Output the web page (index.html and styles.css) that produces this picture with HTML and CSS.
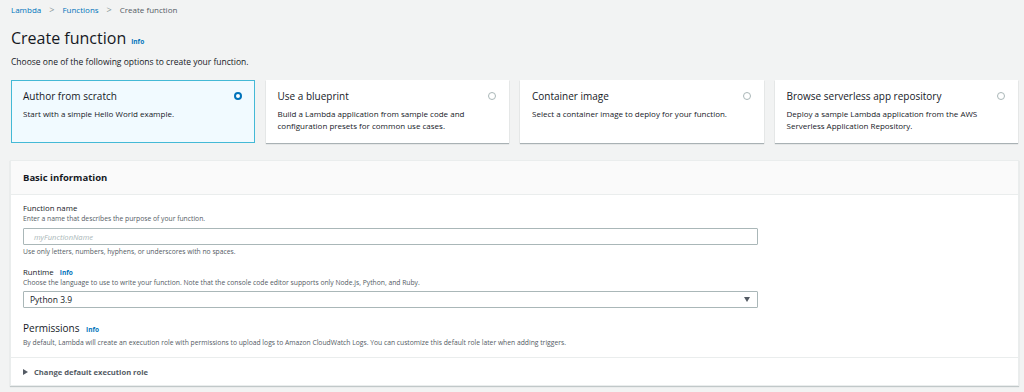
FILE: index.html
```html
<!DOCTYPE html>
<html lang="en">
<head>
  <meta charset="UTF-8" />
  <title>Create function - Lambda</title>
  <link rel="stylesheet" href="styles.css">
</head>
<body>
  <nav class="breadcrumbs">
    <a href="#">Lambda</a>
    <span class="sep">&gt;</span>
    <a href="#">Functions</a>
    <span class="sep">&gt;</span>
    <span class="current">Create function</span>
  </nav>

  <h1 class="page-title">Create function <a href="#" class="info">Info</a></h1>
  <p class="page-desc">Choose one of the following options to create your function.</p>

  <div class="tiles">
    <div class="tile selected">
      <div class="tile-head">
        <span class="tile-title">Author from scratch</span>
        <span class="radio checked"></span>
      </div>
      <div class="tile-desc">Start with a simple Hello World example.</div>
    </div>
    <div class="tile">
      <div class="tile-head">
        <span class="tile-title">Use a blueprint</span>
        <span class="radio"></span>
      </div>
      <div class="tile-desc">Build a Lambda application from sample code and configuration presets for common use cases.</div>
    </div>
    <div class="tile">
      <div class="tile-head">
        <span class="tile-title">Container image</span>
        <span class="radio"></span>
      </div>
      <div class="tile-desc">Select a container image to deploy for your function.</div>
    </div>
    <div class="tile">
      <div class="tile-head">
        <span class="tile-title">Browse serverless app repository</span>
        <span class="radio"></span>
      </div>
      <div class="tile-desc">Deploy a sample Lambda application from the AWS Serverless Application Repository.</div>
    </div>
  </div>

  <section class="panel">
    <div class="panel-header">Basic information</div>
    <div class="panel-body">
      <div class="field">
        <div class="label">Function name</div>
        <div class="hint">Enter a name that describes the purpose of your function.</div>
        <div class="input placeholder">myFunctionName</div>
        <div class="constraint">Use only letters, numbers, hyphens, or underscores with no spaces.</div>
      </div>

      <div class="field runtime">
        <div class="label">Runtime <a href="#" class="info">Info</a></div>
        <div class="hint">Choose the language to use to write your function. Note that the console code editor supports only Node.js, Python, and Ruby.</div>
        <div class="input select">
          <span>Python 3.9</span>
          <svg class="caret" width="6" height="5" viewBox="0 0 6 5"><path d="M0 0h6L3 5z" fill="#545b64"/></svg>
        </div>
      </div>

      <div class="permissions">
        <div class="perm-title">Permissions <a href="#" class="info">Info</a></div>
        <div class="hint">By default, Lambda will create an execution role with permissions to upload logs to Amazon CloudWatch Logs. You can customize this default role later when adding triggers.</div>
      </div>
    </div>
    <div class="expander">
      <svg width="5" height="6" viewBox="0 0 5 6"><path d="M0 0l5 3L0 6z" fill="#545b64"/></svg>
      <span>Change default execution role</span>
    </div>
  </section>
</body>
</html>
```

FILE: styles.css
```css
* {
  box-sizing: border-box;
}

body {
  margin: 0;
  padding: 0 6px 0 11px;
  background: #f2f3f3;
  color: #16191f;
  font-family: "Open Sans", "Liberation Sans", sans-serif;
  height: 392px;
  overflow: hidden;
}

a {
  color: #0073bb;
  text-decoration: none;
}

.breadcrumbs {
  height: 19px;
  display: flex;
  align-items: center;
  font-size: 8px;
}

.breadcrumbs .sep {
  color: #879596;
  margin: 0 8px;
  font-size: 9px;
}

.breadcrumbs .current {
  color: #545b64;
}

.page-title {
  margin: 9px 0 0;
  height: 20px;
  display: flex;
  align-items: baseline;
  font-size: 16px;
  line-height: 20px;
  font-weight: 400;
}

.info {
  font-size: 6.5px;
  line-height: 1;
  font-weight: 700;
  margin-left: 5px;
}

.label .info,
.perm-title .info {
  margin-left: 4px;
}

.page-desc {
  margin: 8px 0 12px;
  font-size: 8.5px;
  line-height: 12px;
  color: #16191f;
}

.tiles {
  display: grid;
  grid-template-columns: repeat(4, 1fr);
  gap: 11px;
}

.tile {
  height: 63px;
  background: #fff;
  border: 1px solid transparent;
  box-shadow: 0 1px 1px rgba(0, 28, 36, 0.3);
  padding: 8px 12px 0 11px;
}

.tile.selected {
  background: #f1faff;
  border-color: #44b9d6;
  box-shadow: none;
}

.tile-head {
  display: flex;
  justify-content: space-between;
  align-items: center;
  height: 14px;
}

.tile-title {
  font-size: 10px;
}

.radio {
  width: 8px;
  height: 8px;
  border-radius: 50%;
  border: 1px solid #aab7b8;
  background: #fff;
}

.radio.checked {
  border: 2.5px solid #0073bb;
}

.tile-desc {
  margin-top: 5px;
  font-size: 8px;
  line-height: 12px;
  color: #16191f;
  padding-right: 20px;
}

.panel {
  margin-top: 18px;
  background: #fff;
  box-shadow: 0 0 0 1px #eaeded, 0 1px 1px 1px rgba(0, 28, 36, 0.2);
  height: 224px;
}

.panel-header {
  height: 34px;
  background: #fafafa;
  border-bottom: 1px solid #eaeded;
  display: flex;
  align-items: center;
  padding-left: 12px;
  font-size: 9.5px;
  font-weight: 700;
}

.panel-body {
  padding: 8px 12px 0;
}

.field {
  width: 735px;
}

.label {
  font-size: 7.8px;
  line-height: 11px;
}

.hint {
  font-size: 6.75px;
  line-height: 10px;
  color: #545b64;
}

.constraint {
  font-size: 6.75px;
  line-height: 10px;
  color: #545b64;
  margin-top: 2px;
}

.input {
  margin-top: 4px;
  height: 17px;
  border: 1px solid #aab7b8;
  border-radius: 1px;
  display: flex;
  align-items: center;
  padding: 0 10px;
  font-size: 8.5px;
}

.placeholder {
  color: #aab7b8;
  font-style: italic;
  font-size: 7.6px;
}

.runtime {
  margin-top: 10px;
}

.select {
  justify-content: space-between;
  margin-top: 3px;
  padding: 0 7px 0 6px;
  color: #16191f;
}

.permissions {
  margin-top: 13px;
}

.perm-title {
  font-size: 10px;
  line-height: 14px;
}

.permissions .hint {
  margin-top: 3px;
}

.expander {
  margin-top: 9px;
  border-top: 1px solid #eaeded;
  height: 28px;
  display: flex;
  align-items: center;
  gap: 6px;
  padding-left: 12px;
  font-size: 7.6px;
  font-weight: 700;
}

.expander span {
  color: #545b64;
}
```
